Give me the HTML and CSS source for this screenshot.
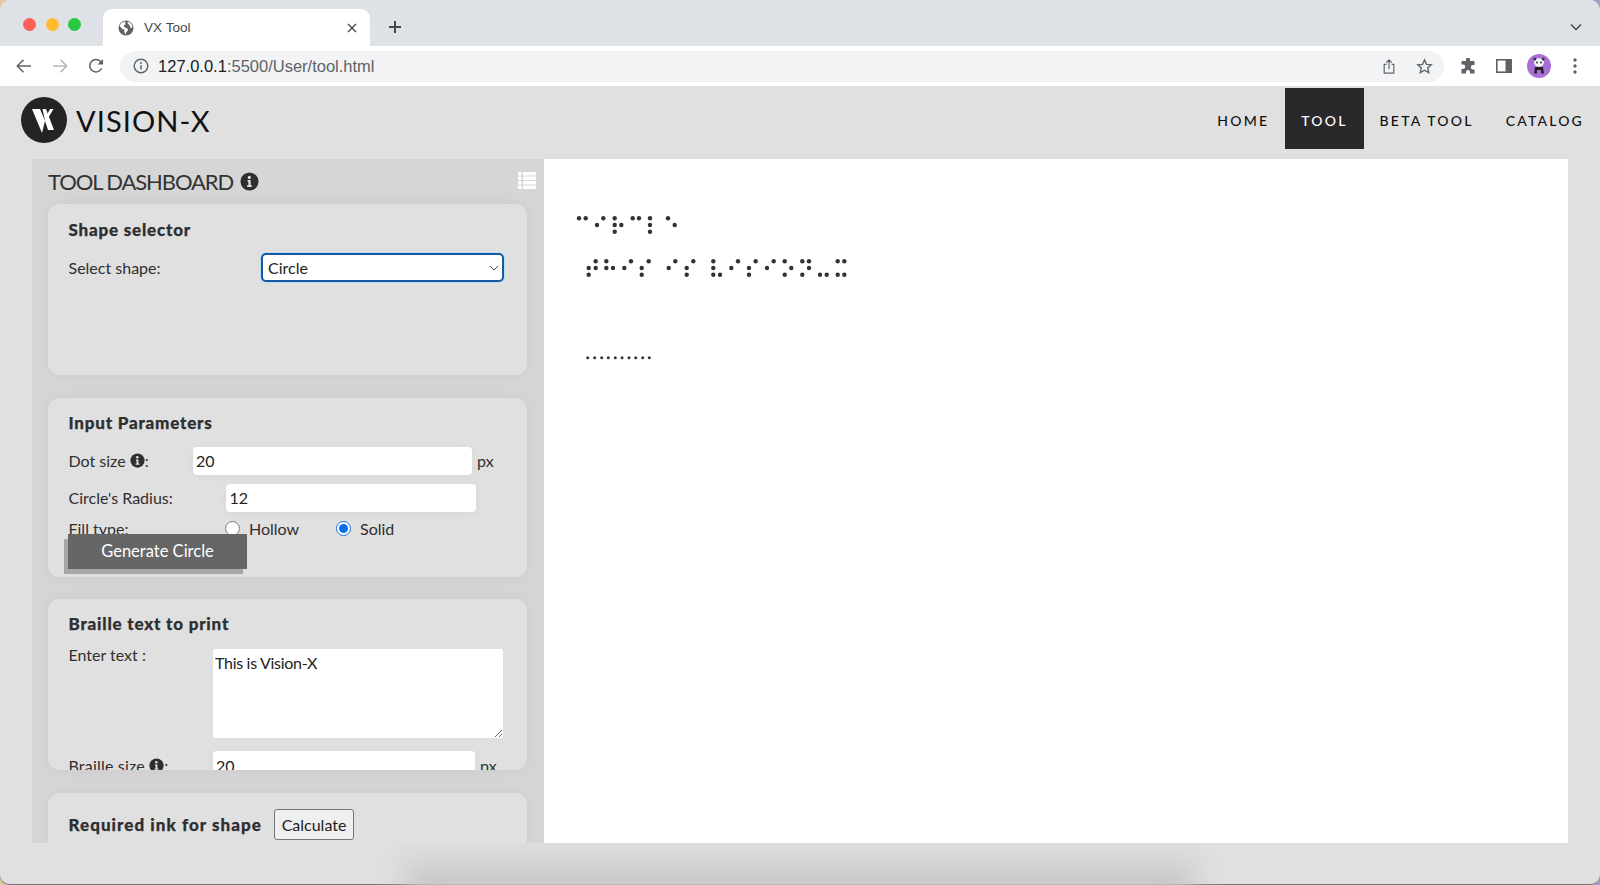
FILE: index.html
```html
<!DOCTYPE html>
<html lang="en">
<head>
    <meta charset="UTF-8">
    <meta name="viewport" content="width=device-width, initial-scale=1.0">
    <title>VX Tool</title>
    <link rel="stylesheet" href="styles.css">
</head>
<body>
<div class="window">

    <!-- browser tabs -->
    <div class="tabstrip">
        <div class="lights">
            <span class="light red"></span>
            <span class="light yellow"></span>
            <span class="light green"></span>
        </div>
        <div class="tab">
            <svg class="favicon" viewBox="0 0 16 16"><circle cx="8" cy="8" r="7.5" fill="#5f6368"/><path d="M7 1.2 3.2 3 1.5 6l3 3 1.7.4.2 2.6L7.500 14.700 8.300 12 10 10.500 9.500 8.500 6.500 7.300 5.500 5.500 7.500 4.500zM10 1.500 9.500 3.500 11.500 5l1 3 1.900-.500A6.800 6.800 0 0 0 10 1.500z" fill="#fff"/></svg>
            <span class="tab-title">VX Tool</span>
            <svg class="tab-close" viewBox="0 0 10 10"><path d="M1 1l8 8M9 1l-8 8" stroke="#45484d" stroke-width="1.400" fill="none"/></svg>
        </div>
        <svg class="new-tab" viewBox="0 0 14 14"><path d="M7 1v12M1 7h12" stroke="#45484d" stroke-width="2" fill="none"/></svg>
        <svg class="tab-list" viewBox="0 0 12 8"><path d="M1 1.500l5 5 5-5" stroke="#45484d" stroke-width="1.500" fill="none"/></svg>
    </div>

    <!-- address bar -->
    <div class="toolbar">
        <span class="tool-btn"><svg viewBox="0 0 16 16" width="16" height="16"><path d="M15 8H1.500M7.500 1.800 1.300 8l6.200 6.200" stroke="#5f6368" stroke-width="1.500" fill="none"/></svg></span>
        <span class="tool-btn"><svg viewBox="0 0 16 16" width="16" height="16"><path d="M1 8h13.500M8.500 1.800 14.700 8l-6.200 6.200" stroke="#b4b6b9" stroke-width="1.500" fill="none"/></svg></span>
        <span class="tool-btn"><svg viewBox="0 0 16 16" width="16" height="16"><path d="M13.600 10.200A6.200 6.200 0 1 1 12.600 3.600L14.700 5.700" stroke="#5f6368" stroke-width="1.500" fill="none"/><path d="M15 1v5.500H9.500z" fill="#5f6368"/></svg></span>
        <div class="omnibox">
            <svg class="site-info" viewBox="0 0 16 16"><circle cx="8" cy="8" r="6.800" stroke="#5f6368" stroke-width="1.400" fill="none"/><path d="M8 7.200v4.300" stroke="#5f6368" stroke-width="1.500"/><circle cx="8" cy="5" r="1" fill="#5f6368"/></svg>
            <span class="url"><b>127.0.0.1</b>:5500/User/tool.html</span>
            <svg class="omni-icon" viewBox="0 0 16 18" width="14" height="17"><path d="M5 6.500H2.500v10h11v-10H11M8 12V1.500M4.800 4.500 8 1.300l3.200 3.200" stroke="#5f6368" stroke-width="1.300" fill="none"/></svg>
            <svg class="omni-icon" viewBox="0 0 18 18" width="17" height="17"><path d="M9 2l2.100 4.700 5.100.5-3.800 3.400 1.100 5L9 13l-4.500 2.600 1.100-5L1.800 7.200l5.100-.5z" stroke="#5f6368" stroke-width="1.400" fill="none"/></svg>
        </div>
        <div class="toolbar-end">
            <span class="tool-btn"><svg viewBox="0 0 16 16" width="16" height="16"><path d="M6 1.500a2 2 0 0 1 4 0V3h4.500v4H13a2.200 2.200 0 0 0 0 4.400h1.500V15.500H10V14a2 2 0 0 0-4 0v1.500H1.500V11H3a2.200 2.200 0 0 0 0-4.400H1.500V3H6z" fill="#5f6368"/></svg></span>
            <span class="tool-btn"><svg viewBox="0 0 16 16" width="16" height="16"><rect x=".8" y="1.800" width="14.400" height="12.400" stroke="#5f6368" stroke-width="1.600" fill="#fff"/><rect x="9.500" y="1.800" width="5.700" height="12.400" fill="#5f6368"/></svg></span>
            <span class="tool-btn"><svg viewBox="0 0 24 24" width="24" height="24"><circle cx="12" cy="12" r="12" fill="#a96fd8"/><ellipse cx="12" cy="8.500" rx="5" ry="4.200" fill="#f5f3f5"/><circle cx="7.800" cy="5" r="1.500" fill="#333"/><circle cx="16.200" cy="5" r="1.500" fill="#333"/><circle cx="10" cy="8.500" r="1" fill="#333"/><circle cx="14" cy="8.500" r="1" fill="#333"/><path d="M8 13h8l1 6.500h-3V16h-4v3.500H7z" fill="#222"/></svg></span>
            <span class="tool-btn"><svg viewBox="0 0 4 16" width="4" height="16"><circle cx="2" cy="2" r="1.700" fill="#5f6368"/><circle cx="2" cy="8" r="1.700" fill="#5f6368"/><circle cx="2" cy="14" r="1.700" fill="#5f6368"/></svg></span>
        </div>
    </div>

    <!-- site header -->
    <header class="site-header">
        <div class="brand">
            <svg class="brand-mark" viewBox="0 0 46 46">
                <circle cx="23" cy="23" r="23" fill="#232326"/>
                <path d="M11 12h8l5 12-3 12z" fill="#fff"/>
                <path d="M21.500 12h3.500l8 21h-6l-3-9z" fill="#fff"/>
                <path d="M29 12h3.500l-6 10-1.200-3z" fill="#fff"/>
            </svg>
            <span class="brand-name">VISION-X</span>
        </div>
        <nav class="nav">
            <a class="nav-item">HOME</a>
            <a class="nav-item active">TOOL</a>
            <a class="nav-item">BETA TOOL</a>
            <a class="nav-item">CATALOG</a>
        </nav>
    </header>

    <main class="content">
        <aside class="sidebar">
            <div class="dash-title">
                <h1>TOOL DASHBOARD</h1>
                <svg class="info big" viewBox="0 0 20 20"><use href="#info-icon"/></svg>
                <svg class="list-icon" viewBox="0 0 18 17"><path d="M0 0h3.500v3.500H0zM5 0h13v3.500H5zM0 4.500h3.500V8H0zM5 4.500h13V8H5zM0 9h3.500v3.500H0zM5 9h13v3.500H5zM0 13.500h3.500V17H0zM5 13.500h13V17H5z" fill="#fff"/></svg>
            </div>

            <section class="card card-shape">
                <h2>Shape selector</h2>
                <div class="row select-row">
                    <label class="label">Select shape:</label>
                    <select class="shape-select"><option>Circle</option></select>
                </div>
            </section>

            <section class="card card-params">
                <h2>Input Parameters</h2>
                <div class="row dot-row">
                    <label class="label">Dot size <svg class="info" viewBox="0 0 20 20"><use href="#info-icon"/></svg>:</label>
                    <input class="field" type="text" value="20">
                    <span class="unit">px</span>
                </div>
                <div class="row radius-row">
                    <label class="label">Circle's Radius:</label>
                    <input class="field" type="text" value="12">
                </div>
                <div class="row fill-row">
                    <label class="label">Fill type:</label>
                    <label class="radio"><input type="radio" name="fill"> Hollow</label>
                    <label class="radio"><input type="radio" name="fill" checked> Solid</label>
                </div>
                <button class="generate-btn">Generate Circle</button>
            </section>

            <section class="card card-braille">
                <h2>Braille text to print</h2>
                <div class="row text-row">
                    <label class="label">Enter text :</label>
                    <textarea class="text-input">This is Vision-X</textarea>
                </div>
                <div class="row size-row">
                    <label class="label">Braille size <svg class="info" viewBox="0 0 20 20"><use href="#info-icon"/></svg>:</label>
                    <input class="field" type="text" value="20">
                    <span class="unit">px</span>
                </div>
            </section>

            <section class="card card-ink">
                <h2>Required ink for shape</h2>
                <button class="calc-btn">Calculate</button>
            </section>
        </aside>

        <div class="canvas">
            <svg class="braille" viewBox="544 159 1024 684">
                <g class="dots">
                    <circle cx="579" cy="218.300" r="2.200"/><circle cx="585.700" cy="218.300" r="2.200"/><circle cx="603.300" cy="218.300" r="2.200"/><circle cx="614.700" cy="218.300" r="2.200"/><circle cx="632.700" cy="218.300" r="2.200"/><circle cx="639" cy="218.300" r="2.200"/><circle cx="650" cy="218.300" r="2.200"/><circle cx="668" cy="218.300" r="2.200"/>
                    <circle cx="597" cy="225" r="2.200"/><circle cx="614.700" cy="225" r="2.200"/><circle cx="621.300" cy="225" r="2.200"/><circle cx="650" cy="225" r="2.200"/><circle cx="674.700" cy="225" r="2.200"/>
                    <circle cx="614.700" cy="231.700" r="2.200"/><circle cx="650" cy="231.700" r="2.200"/>

                    <circle cx="595.700" cy="261.300" r="2.200"/><circle cx="606.300" cy="261.300" r="2.200"/><circle cx="631" cy="261.300" r="2.200"/><circle cx="648.700" cy="261.300" r="2.200"/><circle cx="675.300" cy="261.300" r="2.200"/><circle cx="693.300" cy="261.300" r="2.200"/><circle cx="713.300" cy="261.300" r="2.200"/><circle cx="738" cy="261.300" r="2.200"/><circle cx="755.700" cy="261.300" r="2.200"/><circle cx="773.700" cy="261.300" r="2.200"/><circle cx="784.700" cy="261.300" r="2.200"/><circle cx="802.300" cy="261.300" r="2.200"/><circle cx="809" cy="261.300" r="2.200"/><circle cx="837.700" cy="261.300" r="2.200"/><circle cx="844.300" cy="261.300" r="2.200"/>
                    <circle cx="588.700" cy="268" r="2.200"/><circle cx="595.700" cy="268" r="2.200"/><circle cx="606.300" cy="268" r="2.200"/><circle cx="613" cy="268" r="2.200"/><circle cx="624.300" cy="268" r="2.200"/><circle cx="641.700" cy="268" r="2.200"/><circle cx="668.700" cy="268" r="2.200"/><circle cx="686.700" cy="268" r="2.200"/><circle cx="713.300" cy="268" r="2.200"/><circle cx="731.300" cy="268" r="2.200"/><circle cx="749" cy="268" r="2.200"/><circle cx="767" cy="268" r="2.200"/><circle cx="791.300" cy="268" r="2.200"/><circle cx="809" cy="268" r="2.200"/>
                    <circle cx="588.700" cy="274.700" r="2.200"/><circle cx="641.700" cy="274.700" r="2.200"/><circle cx="686.700" cy="274.700" r="2.200"/><circle cx="713.300" cy="274.700" r="2.200"/><circle cx="720" cy="274.700" r="2.200"/><circle cx="749" cy="274.700" r="2.200"/><circle cx="784.700" cy="274.700" r="2.200"/><circle cx="802.300" cy="274.700" r="2.200"/><circle cx="820" cy="274.700" r="2.200"/><circle cx="826.700" cy="274.700" r="2.200"/><circle cx="837.700" cy="274.700" r="2.200"/><circle cx="844.300" cy="274.700" r="2.200"/>

                    <circle cx="587.700" cy="357.700" r="1.500"/><circle cx="594.700" cy="357.700" r="1.500"/><circle cx="601.700" cy="357.700" r="1.500"/><circle cx="608.300" cy="357.700" r="1.500"/><circle cx="615.300" cy="357.700" r="1.500"/><circle cx="622" cy="357.700" r="1.500"/><circle cx="629" cy="357.700" r="1.500"/><circle cx="635.700" cy="357.700" r="1.500"/><circle cx="642.700" cy="357.700" r="1.500"/><circle cx="649.300" cy="357.700" r="1.500"/>
                </g>
            </svg>
        </div>
    </main>

    <div class="page-foot"><div class="foot-shadow"></div></div>
</div>

<svg class="defs" width="0" height="0">
    <symbol id="info-icon" viewBox="0 0 20 20">
        <circle cx="10" cy="10" r="9.500" fill="#2f2f31"/>
        <path d="M8 8.500h3.200V14h1.300v1.700h-5V14h1.300v-3.800H8z" fill="#e0e0e0"/>
        <circle cx="9.800" cy="5.700" r="1.700" fill="#e0e0e0"/>
    </symbol>
</svg>
</body>
</html>
```

FILE: styles.css
```css
* {
    box-sizing: border-box;
}
html, body {
    margin: 0;
    height: 885px;
    overflow: hidden;
}
body {
    background: linear-gradient(90deg, #e0c9a0, #a79cc6);
    font-family: Lato, "Open Sans", sans-serif;
    color: #2f2f31;
    font-size: 16px;
}
.window {
    height: 885px;
    border-radius: 10px 10px 9px 9px;
    overflow: hidden;
    background: #e0e0e0;
    box-shadow: inset 0 -1px 0 #77777a;
}
.defs {
    display: block;
}

/* browser chrome */
.tabstrip {
    height: 46px;
    background: #dee1e6;
    display: flex;
    align-items: flex-end;
    padding-right: 18px;
}
.lights {
    display: flex;
    gap: 9.500px;
    padding: 0 0 15.500px 23px;
    width: 103px;
}
.light {
    width: 13px;
    height: 13px;
    border-radius: 50%;
}
.red { background: #ff5f57; }
.yellow { background: #febc2e; }
.green { background: #28c840; }
.tab {
    width: 267px;
    height: 37px;
    background: #fff;
    border-radius: 9px 9px 0 0;
    display: flex;
    align-items: center;
    padding: 0 13px 0 15px;
    font-family: "Liberation Sans", Arial, sans-serif;
    font-size: 13.600px;
    color: #45484d;
}
.favicon {
    width: 16px;
    height: 16px;
}
.tab-title {
    margin-left: 10px;
    flex: 1;
}
.tab-close {
    width: 10px;
    height: 10px;
}
.new-tab {
    width: 14px;
    height: 14px;
    margin: 0 0 12px 17.500px;
}
.tab-list {
    width: 12px;
    height: 8px;
    margin: 0 0 15px auto;
}
.toolbar {
    height: 40px;
    background: #fff;
    display: flex;
    align-items: center;
    padding: 0 7px 0 6.500px;
}
.tool-btn {
    width: 35.700px;
    height: 35px;
    display: flex;
    align-items: center;
    justify-content: center;
}
.omnibox {
    flex: 1;
    height: 31px;
    margin-left: 6.500px;
    background: #f1f3f4;
    border-radius: 16px;
    display: flex;
    align-items: center;
    padding: 0 11px 0 13px;
    font-family: "Liberation Sans", Arial, sans-serif;
    font-size: 16.500px;
    color: #5f6368;
}
.site-info {
    width: 16px;
    height: 16px;
}
.url {
    margin-left: 9px;
    flex: 1;
}
.url b {
    font-weight: normal;
    color: #202124;
}
.omni-icon {
    margin-left: 20px;
}
.toolbar-end {
    display: flex;
    margin-left: 6px;
}

/* site header */
.site-header {
    height: 73px;
    display: flex;
    justify-content: space-between;
    align-items: flex-start;
    padding: 2px 0 0 21px;
}
.brand {
    display: flex;
    align-items: center;
    gap: 9px;
    margin-top: 9px;
}
.brand-mark {
    width: 46px;
    height: 46px;
}
.brand-name {
    font-size: 29px;
    color: #111;
    letter-spacing: 1.100px;
}
.nav {
    display: flex;
}
.nav-item {
    height: 61px;
    line-height: 66px;
    padding: 0 16px;
    font-size: 14px;
    font-weight: 500;
    letter-spacing: 2.200px;
    color: #111;
}
.nav-item.active {
    background: #29292b;
    color: #fff;
}

/* main area */
.content {
    height: 684px;
    display: flex;
    padding: 0 32px;
}
.sidebar {
    width: 512px;
    padding: 0 17px 0 16px;
    background: #d6d6d6;
    overflow: hidden;
    display: flex;
    flex-direction: column;
    gap: 22.500px;
}
.dash-title {
    flex: none;
    height: 45px;
    margin-bottom: -22.500px;
    display: flex;
    align-items: flex-start;
    padding-top: 10px;
    position: relative;
}
.dash-title h1 {
    margin: 0;
    font-size: 22px;
    line-height: 26px;
    font-weight: 400;
    letter-spacing: -1.100px;
    color: #333;
}
.info {
    width: 15px;
    height: 15px;
    vertical-align: -1px;
}
.info.big {
    width: 19px;
    height: 19px;
    margin: 3px 0 0 7px;
}
.list-icon {
    position: absolute;
    right: -9px;
    top: 13px;
    width: 18px;
    height: 17px;
}
.card {
    flex: none;
    background: #e0e0e0;
    border-radius: 12px;
    box-shadow: 0 0 18px rgba(0, 0, 0, 0.05);
    padding: 15px 23px 0 20.500px;
    overflow: hidden;
}
.card h2 {
    margin: 0;
    font-size: 17px;
    line-height: 20px;
    font-weight: 900;
    letter-spacing: 0.800px;
    -webkit-text-stroke: 0.250px #2f2f31;
}
.row {
    display: flex;
    align-items: center;
}
.label {
    flex: none;
}
.field {
    height: 28px;
    border: none;
    border-radius: 4px;
    background: #fff;
    padding: 0 3px;
    font: inherit;
    color: #222;
    box-shadow: 0 2px 8px rgba(0, 0, 0, 0.04);
}
.unit {
    margin-left: 5px;
}

.card-shape {
    height: 171px;
    padding-top: 16px;
}
.select-row {
    margin-top: 13px;
}
.select-row .label {
    width: 192.500px;
}
.shape-select {
    width: 243px;
    height: 29px;
    border: 2px solid #155a9e;
    border-radius: 5px;
    box-shadow: 0 0 0 1px #bcdcf5;
    padding: 0 5px;
    font: inherit;
    color: #222;
    appearance: none;
    background: #fff url("data:image/svg+xml,%3Csvg xmlns='http://www.w3.org/2000/svg' width='10' height='6'%3E%3Cpath d='M1 1l4 4 4-4' stroke='%23444' fill='none'/%3E%3C/svg%3E") no-repeat right 3px center;
}

.card-params {
    height: 179px;
}
.dot-row {
    margin-top: 14px;
}
.dot-row .label {
    width: 124.500px;
}
.dot-row .field {
    width: 279px;
    padding-left: 3px;
}
.radius-row {
    margin-top: 9px;
}
.radius-row .label {
    width: 157px;
}
.radius-row .field {
    width: 250.500px;
    padding-left: 4px;
}
.fill-row {
    margin-top: 8px;
    height: 18px;
}
.fill-row .label {
    width: 156.500px;
}
.radio {
    display: flex;
    align-items: center;
    gap: 9px;
    width: 111px;
}
.radio input {
    margin: 0;
    width: 15px;
    height: 15px;
    accent-color: #0b6fe8;
}
.generate-btn {
    display: block;
    position: relative;
    width: 179px;
    height: 35px;
    margin: -4px 0 0 -0.500px;
    border: none;
    background: #666;
    color: #fff;
    font: inherit;
    font-size: 16.500px;
    box-shadow: -4px 5px 0 #a6a6a6;
}

.card-braille {
    height: 171px;
}
.text-row {
    margin-top: 15px;
    align-items: flex-start;
}
.text-row .label {
    width: 144.500px;
    margin-top: -4px;
}
.text-input {
    width: 290px;
    height: 89px;
    border: none;
    border-radius: 3px;
    padding: 4px 2px;
    font: inherit;
    letter-spacing: -0.300px;
    color: #222;
}
.size-row {
    margin-top: 13px;
}
.size-row .label {
    width: 144.500px;
    letter-spacing: 0.200px;
}
.size-row .field {
    width: 262px;
}

.card-ink {
    height: 60px;
    display: flex;
    align-items: flex-start;
    padding-top: 16px;
    flex-shrink: 0;
}
.card-ink h2 {
    width: 205.500px;
    flex: none;
    line-height: 31px;
    letter-spacing: 1.050px;
}
.calc-btn {
    width: 80px;
    height: 31px;
    background: #efefef;
    border: 1px solid #767676;
    border-radius: 3px;
    font: inherit;
    color: #222;
    padding: 0;
}

.canvas {
    flex: 1;
    background: #fff;
}
.braille {
    display: block;
    width: 1024px;
    height: 684px;
}
.dots {
    fill: #333;
}

.page-foot {
    height: 42px;
    overflow: hidden;
    display: flex;
    justify-content: center;
}
.foot-shadow {
    width: 790px;
    height: 70px;
    margin: 2px 0 0 0;
    background: linear-gradient(rgba(196, 196, 196, 0), #c4c4c4 60%);
    filter: blur(14px);
}
```
